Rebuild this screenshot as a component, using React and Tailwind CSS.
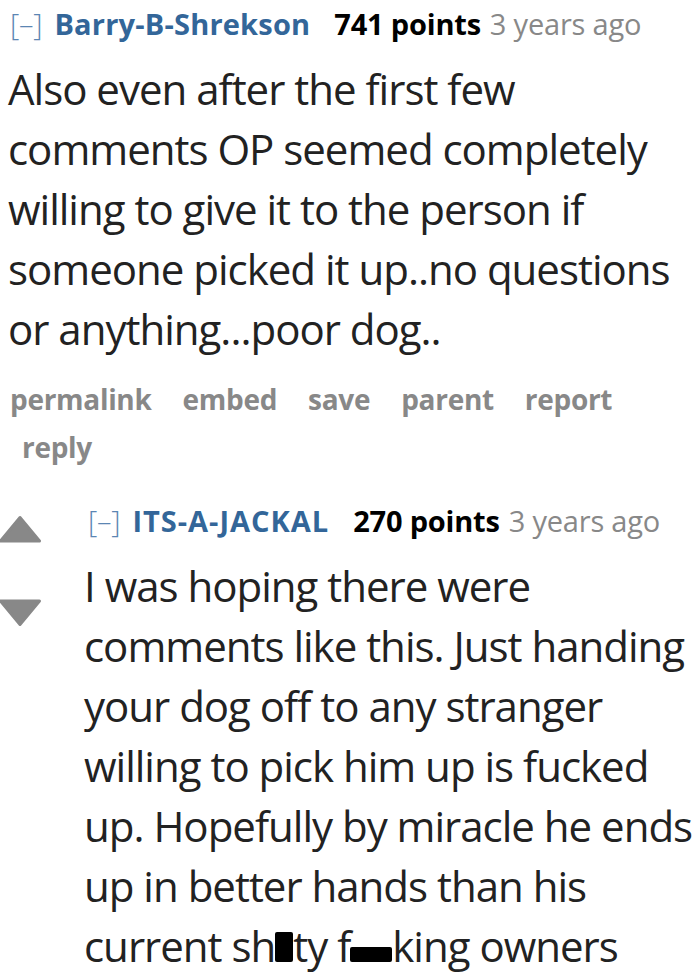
import React from 'react';

const FONT = "font-['Open_Sans','Noto_Sans',sans-serif]";

function Header({ user, points, userTracking }) {
  return (
    <div className="whitespace-nowrap text-[29px] leading-[36px] tracking-[-0.2px]">
      <span className="text-[#5b86b3] font-light">[–]</span>
      <span className={`font-bold text-[#336699] ml-[12px] ${userTracking}`}>{user}</span>
      <span className="font-bold text-black ml-[24px]">{points} points</span>
      <span className="text-[#888] ml-[9px]">3 years ago</span>
    </div>
  );
}

function Line({ children }) {
  return <div className="whitespace-nowrap">{children}</div>;
}

function Redact({ w, h }) {
  return <span className={`inline-block bg-black rounded-[2px] align-baseline ${w} ${h}`} />;
}

function Actions() {
  return (
    <div className="font-bold text-[#888] text-[28px] leading-[48px] tracking-[-0.3px]">
      <div className="flex gap-[31px] whitespace-nowrap">
        <span>permalink</span>
        <span>embed</span>
        <span>save</span>
        <span>parent</span>
        <span>report</span>
      </div>
      <div className="pl-[12px]">reply</div>
    </div>
  );
}

export default function App() {
  return (
    <div className={`${FONT} w-[700px] h-[977px] overflow-hidden bg-white`}>
      {/* parent comment */}
      <div className="pl-[10px] pt-[6px]">
        <Header user="Barry-B-Shrekson" points="741" userTracking="tracking-[0.2px]" />
        <div className="mt-[17px] text-[42px] leading-[60px] text-[#222] tracking-[-1px] -ml-[2px]">
          <Line>Also even after the first few</Line>
          <Line>comments OP seemed completely</Line>
          <Line>willing to give it to the person if</Line>
          <Line>someone picked it up..no questions</Line>
          <Line>or anything...poor dog..</Line>
        </div>
        <div className="mt-[16px]">
          <Actions />
        </div>
      </div>

      {/* child comment */}
      <div className="flex mt-[30px]">
        <div className="w-[86px] shrink-0 flex flex-col pt-[14px] gap-[56px] -ml-[2px]">
          <svg width="44" height="28" viewBox="0 0 44 28">
            <path d="M22 2.5 L41.5 26 L2.5 26 Z" fill="#888" stroke="#888" strokeWidth="3" strokeLinejoin="round" />
          </svg>
          <svg width="44" height="28" viewBox="0 0 44 28">
            <path d="M2.5 2 L41.5 2 L22 25.5 Z" fill="#888" stroke="#888" strokeWidth="3" strokeLinejoin="round" />
          </svg>
        </div>
        <div className="pl-[4px] pt-[2px]">
          <Header user="ITS-A-JACKAL" points="270" userTracking="tracking-[1px]" />
          <div className="mt-[17px] text-[42px] leading-[60px] text-[#222] tracking-[-1px] -ml-[4px]">
            <Line>I was hoping there were</Line>
            <Line>comments like this. Just handing</Line>
            <Line>your dog off to any stranger</Line>
            <Line>willing to pick him up is fucked</Line>
            <Line>up. Hopefully by miracle he ends</Line>
            <Line>up in better hands than his</Line>
            <Line>
              current sh<Redact w="w-[18px]" h="h-[30px]" />ty f<Redact w="w-[42px]" h="h-[15px]" />king owners
            </Line>
          </div>
        </div>
      </div>
    </div>
  );
}
